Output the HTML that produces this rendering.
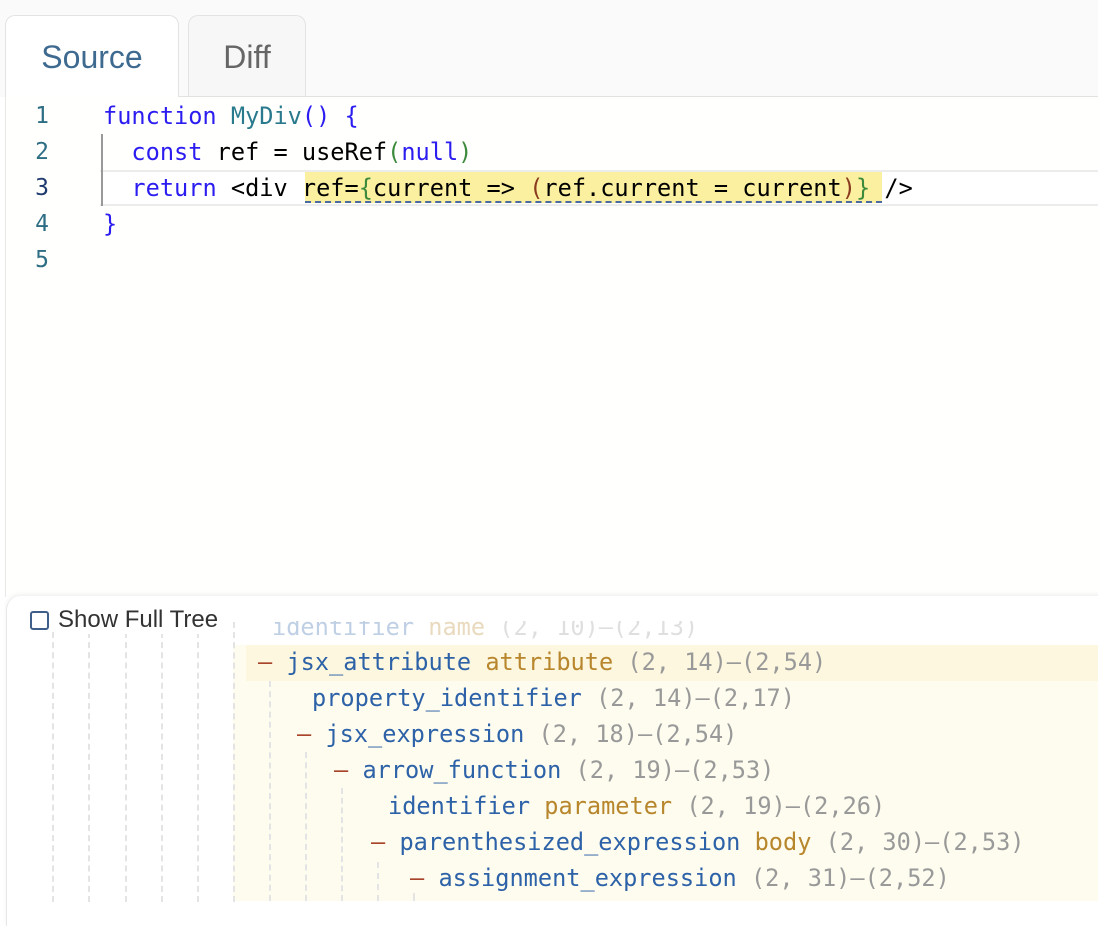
<!DOCTYPE html>
<html><head><meta charset="utf-8"><style>
*{margin:0;padding:0;box-sizing:border-box}
body{width:1098px;height:922px;overflow:hidden;background:#fff;position:relative;font-family:"Liberation Sans",sans-serif}
.tab{position:absolute;top:15px;height:83px;border:1px solid #e3e3e3;border-bottom:none;border-radius:10px 10px 0 0;font-size:32px;text-align:center;line-height:82px}
.mono{font-family:"DejaVu Sans Mono","Liberation Mono",monospace;font-size:23.6px;white-space:pre;position:absolute;line-height:36px}
.ln{position:absolute;left:0;width:60px;text-align:center;color:#2e6e85;font-family:"DejaVu Sans Mono",monospace;font-size:23px;line-height:36px}
.k{color:#2b1cf0}.f{color:#2a7a8e}.g{color:#3c8a3c}.b{color:#8a3a1e}
.row{position:absolute;font-family:"DejaVu Sans Mono","Liberation Mono",monospace;font-size:23.6px;line-height:36px;white-space:pre;color:#999}
.n{color:#2d62a8}.fl{color:#b8862c}.d{color:#a8442a}
.v{position:absolute;width:0;border-left:2px dashed #e4e4e4}
</style></head><body>
<div style="position:absolute;left:0;top:0;width:1098px;height:97px;background:#fafafa"></div>
<div class="tab" style="left:5px;width:174px;background:#fff;color:#3f6a90;height:84px">Source</div>
<div class="tab" style="left:188px;width:118px;background:#f7f7f7;color:#666">Diff</div>
<div style="position:absolute;left:178px;top:96px;width:920px;height:2px;background:#e2e2e2"></div>
<div style="position:absolute;left:5px;top:97px;width:1093px;height:500px;background:#fffffd;border-left:1px solid #e8e8e8"></div>
<div style="position:absolute;left:100px;top:170px;width:998px;height:36px;border-top:2px solid #ececec;border-bottom:2px solid #ececec;background:#fff"></div>
<div style="position:absolute;left:305px;top:172px;width:577px;height:31px;background:#fbf0a0;border-bottom:2px dashed #4b6aa0"></div>
<div style="position:absolute;left:101px;top:134px;width:2px;height:72px;background:#999"></div>
<div class="ln" style="top:98px;left:12px">1</div>
<div class="ln" style="top:134px;left:12px">2</div>
<div class="ln" style="top:170px;left:12px;color:#1e3a6e">3</div>
<div class="ln" style="top:206px;left:12px">4</div>
<div class="ln" style="top:242px;left:12px">5</div>
<div class="mono" style="left:103px;top:98px"><span class="k">function</span> <span class="f">MyDiv</span><span class="k">() {</span></div>
<div class="mono" style="left:103px;top:134px">  <span class="k">const</span> ref = useRef<span class="g">(</span><span class="k">null</span><span class="g">)</span></div>
<div class="mono" style="left:103px;top:170px">  <span class="k">return</span> &lt;div ref=<span class="g">{</span>current =&gt; <span class="b">(</span>ref.current = current<span class="b">)</span><span class="g">}</span> /&gt;</div>
<div class="mono" style="left:103px;top:206px"><span class="k">}</span></div>
<div style="position:absolute;left:6px;top:596px;width:1100px;height:330px;background:#fff;border-radius:14px 0 0 0;box-shadow:0 -2px 4px rgba(0,0,0,0.06);border-left:1px solid #e8e8e8"></div>
<div style="position:absolute;left:233px;top:645px;width:865px;height:256px;background:#fdfcee"></div>
<div style="position:absolute;left:246px;top:645px;width:852px;height:36px;background:#fcf7de"></div>
<div class="v" style="left:52px;top:632px;height:270px"></div>
<div class="v" style="left:88px;top:632px;height:270px"></div>
<div class="v" style="left:125px;top:632px;height:270px"></div>
<div class="v" style="left:161px;top:632px;height:270px"></div>
<div class="v" style="left:197px;top:632px;height:270px"></div>
<div class="v" style="left:233px;top:622px;height:280px"></div>
<div class="v" style="left:269px;top:681px;height:220px"></div>
<div class="v" style="left:305px;top:752px;height:149px"></div>
<div class="v" style="left:341px;top:788px;height:113px"></div>
<div class="v" style="left:377px;top:862px;height:39px"></div>
<div class="v" style="left:413px;top:893px;height:8px"></div>
<div style="position:absolute;left:0;top:621px;width:1098px;height:24px;overflow:hidden"><div class="row" style="left:272px;top:-12px;opacity:.3"><span class="n">identifier</span> <span class="fl">name</span> (2, 10)–(2,13)</div></div>
<div style="position:absolute;left:30px;top:611px;width:19px;height:19px;border:2px solid #3f5f8a;border-radius:3px;background:#fff"></div>
<div style="position:absolute;left:58px;top:606px;font-size:24px;color:#333;background:#fff;padding-right:6px">Show Full Tree</div>
<div class="row" style="left:258px;top:644px"><span class="d">–</span> <span class="n">jsx_attribute</span> <span class="fl">attribute</span> (2, 14)–(2,54)</div>
<div class="row" style="left:312px;top:680px"><span class="n">property_identifier</span> (2, 14)–(2,17)</div>
<div class="row" style="left:297px;top:716px"><span class="d">–</span> <span class="n">jsx_expression</span> (2, 18)–(2,54)</div>
<div class="row" style="left:334px;top:752px"><span class="d">–</span> <span class="n">arrow_function</span> (2, 19)–(2,53)</div>
<div class="row" style="left:388px;top:788px"><span class="n">identifier</span> <span class="fl">parameter</span> (2, 19)–(2,26)</div>
<div class="row" style="left:371px;top:824px"><span class="d">–</span> <span class="n">parenthesized_expression</span> <span class="fl">body</span> (2, 30)–(2,53)</div>
<div class="row" style="left:410px;top:860px"><span class="d">–</span> <span class="n">assignment_expression</span> (2, 31)–(2,52)</div>
</body></html>
